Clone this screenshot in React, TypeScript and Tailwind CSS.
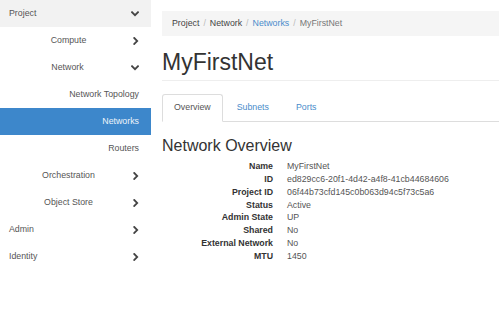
import React from "react";

const ChevronDown = () => (
  <svg width="8" height="6" viewBox="0 0 8 6" className="shrink-0">
    <path d="M1 1.2 L4 4.2 L7 1.2" fill="none" stroke="#444" strokeWidth="1.8" strokeLinecap="square" />
  </svg>
);

const ChevronRight = () => (
  <svg width="6" height="8" viewBox="0 0 6 8" className="shrink-0">
    <path d="M1.2 1 L4.2 4 L1.2 7" fill="none" stroke="#444" strokeWidth="1.8" strokeLinecap="square" />
  </svg>
);

function TopRow({ label, open, bg }: { label: string; open?: boolean; bg?: boolean }) {
  return (
    <div className={`h-[27px] flex items-center pl-[9px] ${bg ? "bg-[#f2f2f2]" : ""}`}>
      <span className="flex-1 text-[#555]">{label}</span>
      <span className={open ? "w-[20px]" : "w-[18px]"}>{open ? <ChevronDown /> : <ChevronRight />}</span>
    </div>
  );
}

function GroupRow({ label, open }: { label: string; open?: boolean }) {
  return (
    <div className="h-[27px] flex items-center">
      <span className={`${open ? "w-[131px]" : "w-[133px]"} pl-[4px] text-center text-[#555]`}>{label}</span>
      {open ? <ChevronDown /> : <ChevronRight />}
    </div>
  );
}

function LeafRow({ label, active }: { label: string; active?: boolean }) {
  return (
    <div
      className={`h-[27px] flex items-center justify-end pr-[12px] ${
        active ? "bg-[#3d87cb] text-[#eef4fa]" : "text-[#555]"
      }`}
    >
      {label}
    </div>
  );
}

const details: [string, string][] = [
  ["Name", "MyFirstNet"],
  ["ID", "ed829cc6-20f1-4d42-a4f8-41cb44684606"],
  ["Project ID", "06f44b73cfd145c0b063d94c5f73c5a6"],
  ["Status", "Active"],
  ["Admin State", "UP"],
  ["Shared", "No"],
  ["External Network", "No"],
  ["MTU", "1450"],
];

export default function App() {
  return (
    <div
      className="w-[499px] h-[329px] bg-white flex overflow-hidden text-[8.8px]"
      style={{ fontFamily: '"Liberation Sans", Arial, sans-serif' }}
    >
      <aside className="w-[151px] shrink-0">
        <TopRow label="Project" open bg />
        <GroupRow label="Compute" />
        <GroupRow label="Network" open />
        <LeafRow label="Network Topology" />
        <LeafRow label="Networks" active />
        <LeafRow label="Routers" />
        <GroupRow label="Orchestration" />
        <GroupRow label="Object Store" />
        <TopRow label="Admin" />
        <TopRow label="Identity" />
      </aside>
      <main className="flex-1 pl-[11px] min-w-0">
        <div className="mt-[11px] h-[25px] bg-[#f5f5f5] flex items-center pl-[10px] whitespace-nowrap">
          <span className="text-[#444]">Project</span>
          <span className="text-[#bbb] px-[4px]">/</span>
          <span className="text-[#444]">Network</span>
          <span className="text-[#bbb] px-[4px]">/</span>
          <span className="text-[#4a8ccb]">Networks</span>
          <span className="text-[#bbb] px-[4px]">/</span>
          <span className="text-[#777]">MyFirstNet</span>
        </div>
        <h1 className="mt-[14px] pb-[5px] text-[23px] leading-[25px] text-[#333] border-b border-[#eeeeee]">
          MyFirstNet
        </h1>
        <div className="mt-[13px] flex border-b border-[#dddddd]">
          <div className="h-[28px] -mb-px px-[11px] flex items-center border border-[#dddddd] border-b-white bg-white rounded-t-[3px] text-[#555]">
            Overview
          </div>
          <div className="h-[28px] -mb-px px-[13px] flex items-center border border-transparent text-[#4a8ccb]">
            Subnets
          </div>
          <div className="h-[28px] -mb-px px-[12px] flex items-center border border-transparent text-[#4a8ccb]">
            Ports
          </div>
        </div>
        <h2 className="mt-[15px] text-[16px] leading-[18px] text-[#333]">Network Overview</h2>
        <div className="mt-[5px] grid grid-cols-[111px_1fr] gap-x-[14px] leading-[12.857px]">
          {details.map(([k, v]) => (
            <React.Fragment key={k}>
              <div className="text-right font-bold text-[#333]">{k}</div>
              <div className="text-[#555] whitespace-nowrap">{v}</div>
            </React.Fragment>
          ))}
        </div>
      </main>
    </div>
  );
}
